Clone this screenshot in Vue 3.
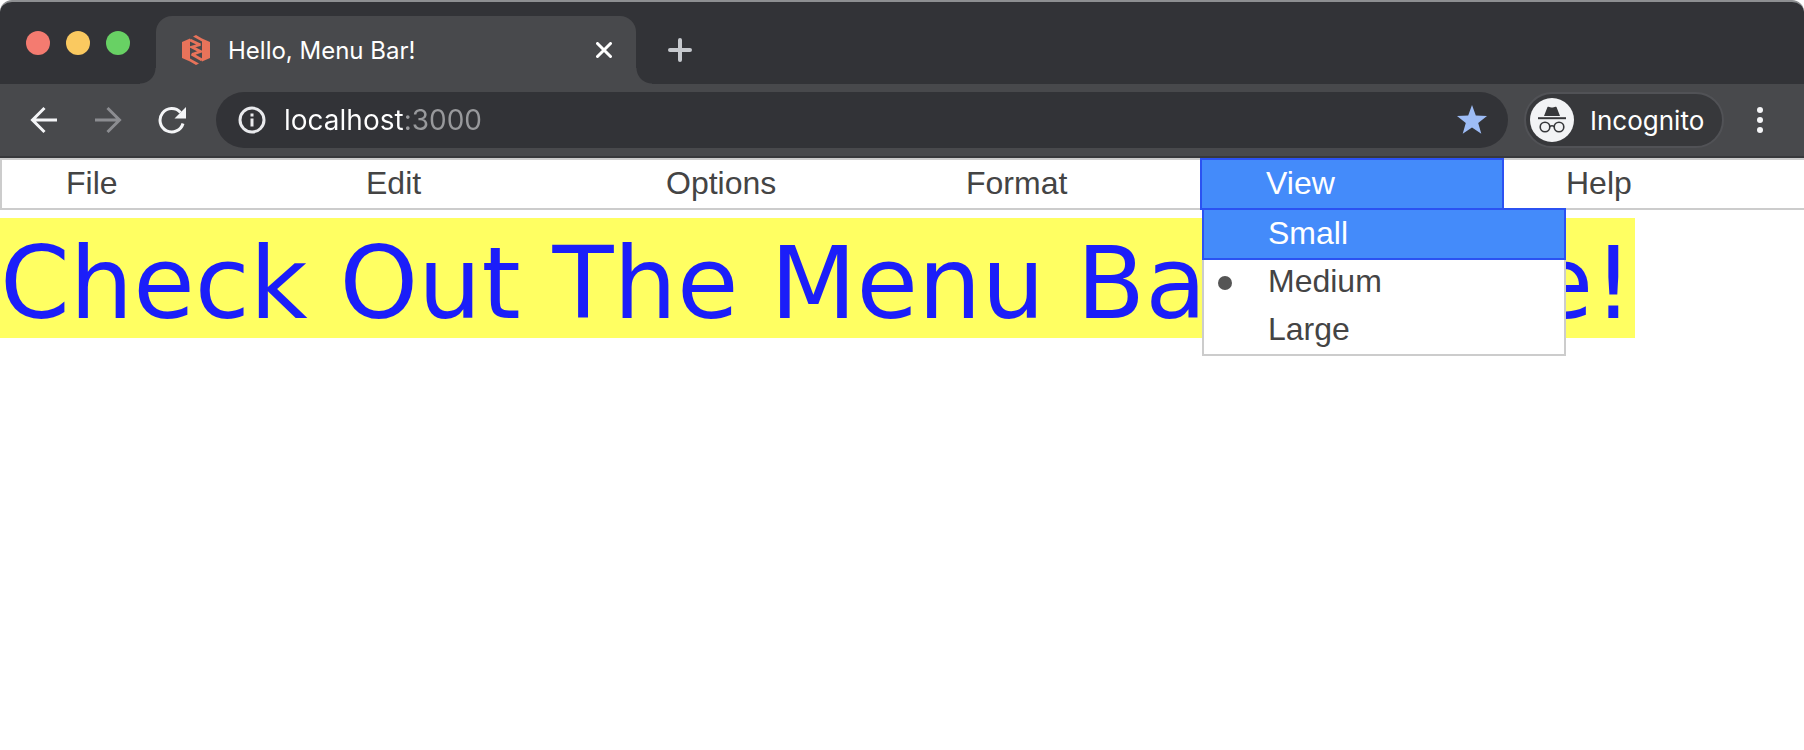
<script setup>
import { ref } from 'vue'

const menus = ['File', 'Edit', 'Options', 'Format', 'View', 'Help']
const sizes = ['Small', 'Medium', 'Large']
const openMenu = ref('View')
const focused = ref('Small')
const chosen = ref('Medium')
const address = ref('localhost:3000')

function toggle(name) {
  openMenu.value = openMenu.value === name ? '' : name
}
</script>

<template>
  <div class="window">
    <header>
      <div class="strip">
        <div class="lights">
          <button class="light red" aria-label="Close window"></button>
          <button class="light amber" aria-label="Minimize window"></button>
          <button class="light green" aria-label="Zoom window"></button>
        </div>
        <div class="tab">
          <svg class="favicon" width="28" height="30" viewBox="0 0 28 30" aria-hidden="true">
            <path d="M0 7 8 3.500V26.500L0 23Z M28 7 20 3.500V26.500L28 23Z M11 1.500 14 0 20 3.500V6.500Z M17 28.500 14 30 8 26.500V23.500Z" fill="#e8735a" />
            <path d="M8 5 18.500 10 M18.500 9.500 10 12 18.500 16.500 10 19.500 M9.500 19 20 25" fill="none" stroke="#e8735a" stroke-width="2.800" />
          </svg>
          <span class="title">Hello, Menu Bar!</span>
          <button class="icon" aria-label="Close tab">
            <svg width="16" height="16" viewBox="0 0 16 16"><path d="M1.500 1.500 14.500 14.500M14.500 1.500 1.500 14.500" stroke="#fff" stroke-width="3" stroke-linecap="round" /></svg>
          </button>
        </div>
        <button class="icon plus" aria-label="New tab">
          <svg width="24" height="24" viewBox="0 0 24 24"><path d="M12 2V22M2 12H22" stroke="#c6c9ce" stroke-width="4" stroke-linecap="round" /></svg>
        </button>
      </div>

      <div class="toolbar">
        <nav class="nav" aria-label="History">
          <button class="icon" aria-label="Back">
            <svg width="28" height="28" viewBox="0 0 28 28" fill="none" stroke="#f4f5f7" stroke-width="3"><path d="M27 14H3M14.500 2 2.500 14 14.500 26" /></svg>
          </button>
          <button class="icon" aria-label="Forward">
            <svg width="28" height="28" viewBox="0 0 28 28" fill="none" stroke="#8c8d91" stroke-width="3"><path d="M1 14H25M13.500 2 25.500 14 13.500 26" /></svg>
          </button>
          <button class="icon" aria-label="Reload">
            <svg width="28" height="28" viewBox="0 0 28 28"><path d="M25 17.500A11.700 11.700 0 1 1 22.500 6.500" fill="none" stroke="#f4f5f7" stroke-width="3" /><path d="M28 1V12.500H16.500Z" fill="#f4f5f7" /></svg>
          </button>
        </nav>
        <div class="omnibox">
          <svg width="28" height="28" viewBox="0 0 28 28" aria-hidden="true">
            <circle cx="14" cy="14" r="12" fill="none" stroke="#e9eaed" stroke-width="3" />
            <path d="M14 12.500V20.500M14 7.500V10.500" stroke="#e9eaed" stroke-width="3" />
          </svg>
          <input v-model="address" class="address" type="text" aria-label="Address" />
          <button class="icon" aria-label="Bookmark">
            <svg width="30" height="30" viewBox="0 0 30 30"><path d="M15 0 18.800 10.600 30 11 21.200 18 24.300 28.700 15 22.400 5.700 28.700 8.800 18 0 11 11.200 10.600Z" fill="#9dbcf5" /></svg>
          </button>
        </div>
        <button class="profile">
          <svg width="44" height="44" viewBox="0 0 44 44" aria-hidden="true">
            <circle cx="22" cy="22" r="22" fill="#f2f3f5" />
            <path d="M17.500 9C19 8.200 20.500 9.600 22 9.600S25 8.200 26.500 9L30 18H14Z" fill="#37383b" />
            <path d="M8 20.200H36" stroke="#37383b" stroke-width="2" />
            <g fill="none" stroke="#37383b" stroke-width="1.600"><circle cx="15" cy="29" r="4.800" /><circle cx="29" cy="29" r="4.800" /><path d="M19.800 28.500Q22 27 24.200 28.500" /></g>
          </svg>
          <span>Incognito</span>
        </button>
        <button class="icon more" aria-label="More">
          <svg width="8" height="28" viewBox="0 0 8 28" fill="#f4f5f7"><circle cx="4" cy="4" r="3" /><circle cx="4" cy="14" r="3" /><circle cx="4" cy="24" r="3" /></svg>
        </button>
      </div>
    </header>

    <main>
      <ul class="menubar" role="menubar">
        <li v-for="name in menus" :key="name" class="entry" role="none">
          <button class="item" :class="{ active: openMenu === name }" role="menuitem" :aria-expanded="openMenu === name" @click="toggle(name)">{{ name }}</button>
          <ul v-if="name === 'View' && openMenu === name" class="popup" role="menu" aria-label="View">
            <li v-for="size in sizes" :key="size" role="none">
              <button class="item" :class="{ active: focused === size, checked: chosen === size }" role="menuitemradio" :aria-checked="chosen === size" @mouseenter="focused = size" @click="chosen = size">{{ size }}</button>
            </li>
          </ul>
        </li>
      </ul>
      <h1>Check Out The Menu Bar Above!</h1>
    </main>
  </div>
</template>

<style>
body {
  background: #fff;
}
</style>

<style scoped>
* {
  box-sizing: border-box;
}
button {
  margin: 0;
  padding: 0;
  border: 0;
  background: none;
  font: inherit;
  color: inherit;
}
ul {
  margin: 0;
  padding: 0;
  list-style: none;
}
svg {
  display: block;
  flex: none;
}
.window {
  min-height: 100vh;
}
header {
  font-family: Inter, "Liberation Sans", sans-serif;
  color: #fff;
}
.strip {
  display: flex;
  align-items: flex-start;
  height: 84px;
  padding: 14px 26px 0;
  border-top: 2px solid #8d8f91;
  border-radius: 12px 12px 0 0;
  background: #323337;
}
.lights {
  display: flex;
  gap: 16px;
  width: 130px;
  padding-top: 15px;
}
.light {
  width: 24px;
  height: 24px;
  border-radius: 50%;
}
.red {
  background: #f47b70;
}
.amber {
  background: #fac960;
}
.green {
  background: #68d164;
}
.tab {
  position: relative;
  display: flex;
  align-items: center;
  width: 480px;
  height: 68px;
  padding: 0 24px 0 26px;
  border-radius: 16px 16px 0 0;
  background: #48494c;
}
.tab::before,
.tab::after {
  content: "";
  position: absolute;
  bottom: 0;
  width: 16px;
  height: 16px;
}
.tab::before {
  right: 100%;
  background: radial-gradient(circle at 0 0, #323337 15px, #48494c 16px);
}
.tab::after {
  left: 100%;
  background: radial-gradient(circle at 100% 0, #323337 15px, #48494c 16px);
}
.title {
  flex: 1;
  padding-left: 18px;
  font-size: 24px;
}
.plus {
  margin: 22px 0 0 32px;
}
.toolbar {
  display: flex;
  align-items: center;
  height: 74px;
  padding: 6px 40px 6px 30px;
  border-bottom: 2px solid #38393c;
  background: #48494c;
}
.nav {
  display: flex;
  gap: 36px;
  margin-right: 30px;
}
.omnibox {
  display: flex;
  flex: 1;
  align-items: center;
  min-width: 0;
  height: 56px;
  padding: 0 21px 0 22px;
  border-radius: 28px;
  background: #323337;
}
.address {
  flex: 1;
  min-width: 0;
  margin-left: 18px;
  padding: 0;
  border: 0;
  outline: 0;
  font-family: inherit;
  font-size: 28px;
  color: transparent;
  caret-color: #fff;
  background: linear-gradient(to right, #fff 119px, #98999c 119px);
  background-clip: text;
}
.profile {
  display: flex;
  align-items: center;
  gap: 16px;
  width: 200px;
  height: 56px;
  margin: 0 32px 0 16px;
  padding: 0 4px;
  border: 2px solid #515256;
  border-radius: 28px;
  background: #37383b;
  font-size: 26px;
}
.menubar {
  display: flex;
  border: 2px solid #ccc;
  border-right: 0;
  font-family: "Liberation Sans", Arial, sans-serif;
  font-size: 32px;
  line-height: 46px;
  color: #444;
}
.entry {
  position: relative;
  width: 300px;
  height: 48px;
}
.item {
  display: block;
  width: 100%;
  height: 48px;
  padding: 0 64px 2px;
  text-align: left;
}
.active {
  position: relative;
  background: #448bfa;
  box-shadow: 0 0 0 2px #2b52f2;
  color: #fff;
}
.popup {
  position: absolute;
  top: 100%;
  left: 0;
  z-index: 1;
  width: 364px;
  border: 2px solid #ccc;
  background: #fff;
}
.checked {
  position: relative;
}
.checked::before {
  content: "";
  position: absolute;
  top: 18px;
  left: 14px;
  width: 14px;
  height: 14px;
  border-radius: 50%;
  background: #555;
}
h1 {
  width: max-content;
  margin: 8px 0 0;
  padding: 12px 2px 0 0;
  background: #ffff62;
  font-family: Verdana, "DejaVu Sans", sans-serif;
  font-size: 100px;
  font-weight: 400;
  line-height: 108px;
  color: #1b1ef9;
}
</style>
